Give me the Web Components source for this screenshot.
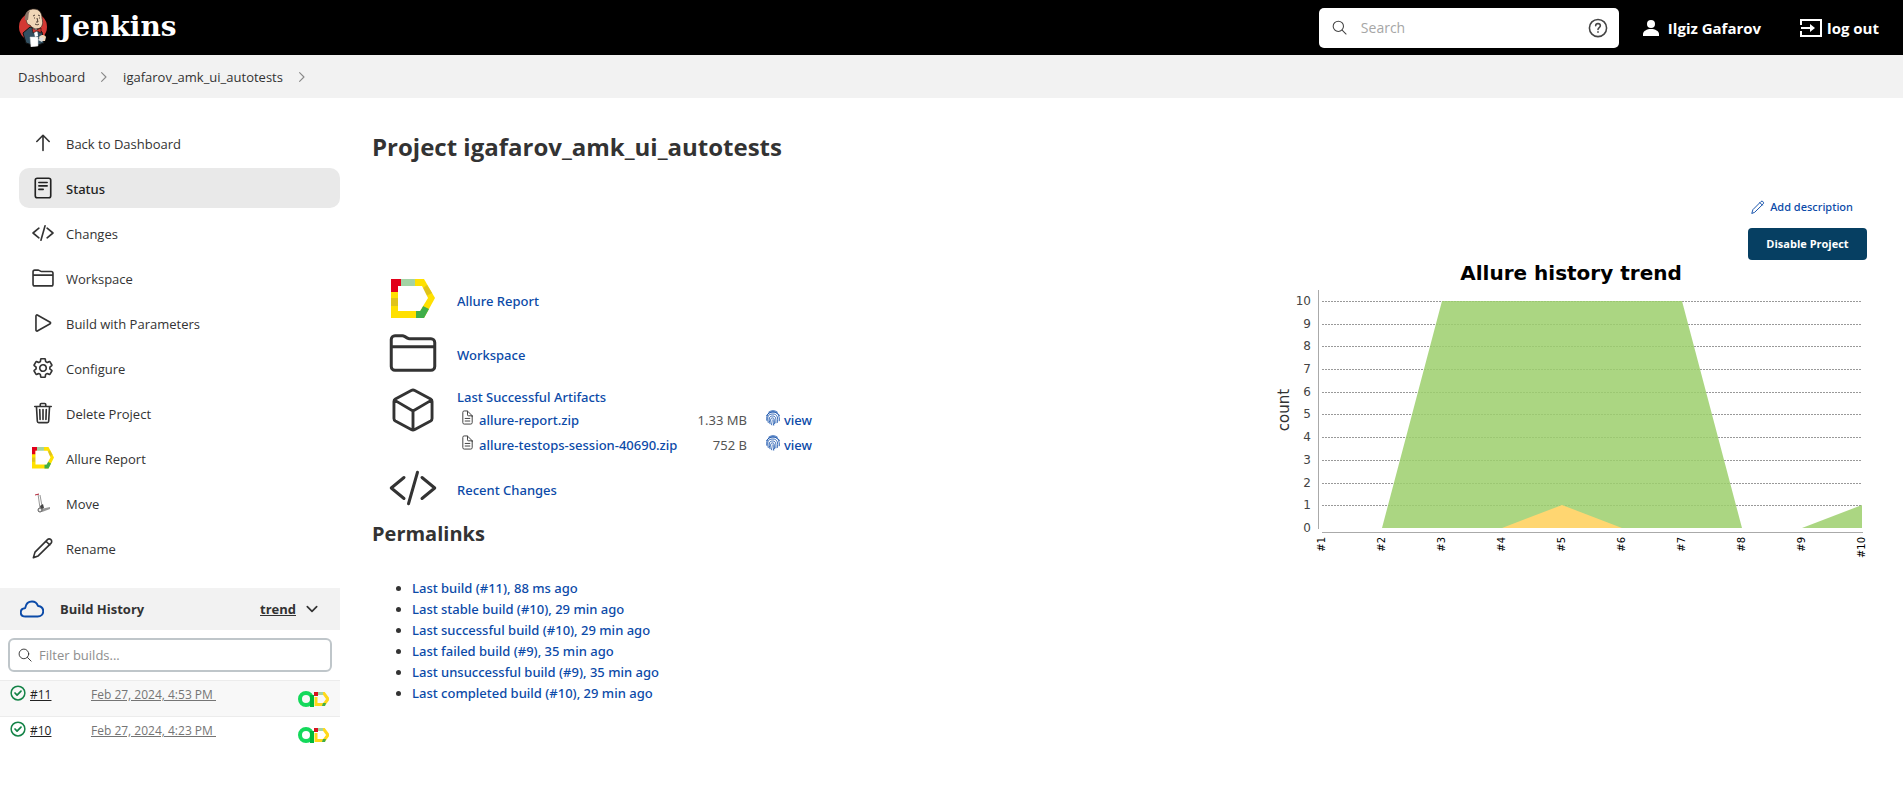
<!DOCTYPE html>
<html lang="en">
<head>
<meta charset="utf-8">
<title>igafarov_amk_ui_autotests [Jenkins]</title>
<style>
  body { margin: 0; background: #fff; color: #333; font: 13px/20px "Open Sans", "Noto Sans", sans-serif; --medium: "Noto Sans", "Open Sans", sans-serif; }
  .page { display: flex; align-items: flex-start; }
  side-panel { flex: 0 0 340px; }
  project-main { flex: 1 1 0; min-width: 0; }
</style>
</head>
<body>
<page-header></page-header>
<bread-crumbs></bread-crumbs>
<div class="page">
  <side-panel>
    <side-task icon="up">Back to Dashboard</side-task>
    <side-task icon="status" active>Status</side-task>
    <side-task icon="code">Changes</side-task>
    <side-task icon="folder">Workspace</side-task>
    <side-task icon="play">Build with Parameters</side-task>
    <side-task icon="gear">Configure</side-task>
    <side-task icon="trash">Delete Project</side-task>
    <side-task icon="allure">Allure Report</side-task>
    <side-task icon="move">Move</side-task>
    <side-task icon="pencil">Rename</side-task>
    <build-history slot="history">
      <build-row number="#11" striped>Feb 27, 2024, 4:53 PM&nbsp;</build-row>
      <build-row number="#10">Feb 27, 2024, 4:23 PM&nbsp;</build-row>
    </build-history>
  </side-panel>
  <project-main></project-main>
</div>
<script>
const ICONS = {
  up: '<path d="M112 220l144-144 144 144M256 92v336"/>',
  status: '<rect x="76" y="28" width="360" height="456" rx="48"/><path d="M160 128h192M160 208h192M160 288h100"/>',
  code: '<path d="M160 368L24 256l136-112M352 368l136-112-136-112M304 88l-96 336"/>',
  folder: '<path d="M448 440H64a40 40 0 01-40-40V112a40 40 0 0140-40h80a40 40 0 0122 7l30 18a40 40 0 0022 7h230a40 40 0 0140 40v256a40 40 0 01-40 40zM24 188h464"/>',
  play: '<path d="M92 91v330c0 17 17 28 31 20l300-168c12-7 12-27 0-34L123 71c-14-8-31 3-31 20z"/>',
  gear: '<path d="M262 180a76 76 0 1070 70 76 76 0 00-70-70zM416 256a154 154 0 01-2 21l46 35a11 11 0 012 14l-42 74a11 11 0 01-13 5l-45-18a16 16 0 00-15 1A164 164 0 01325 401a16 16 0 00-9 12l-7 48a11 11 0 01-10 9h-86a11 11 0 01-10-9l-7-48a16 16 0 00-9-12 155 155 0 01-22-13 16 16 0 00-15-1l-45 18a11 11 0 01-13-5l-43-74a11 11 0 013-14l38-30a16 16 0 006-14 150 150 0 010-25 16 16 0 00-6-14l-38-30a11 11 0 01-3-13l43-74a11 11 0 0113-5l45 18a16 16 0 0015-1A164 164 0 01187 111a16 16 0 009-12l7-48a11 11 0 0110-9h86a11 11 0 0110 9l7 48a16 16 0 009 12 155 155 0 0122 13 16 16 0 0015 1l45-18a11 11 0 0113 5l42 74a11 11 0 01-2 13l-38 30a16 16 0 00-6 14z"/>',
  trash: '<path d="M104 112l20 336c1 18 14 32 32 32h200c18 0 31-14 32-32l20-336M64 104h384M192 104V60a24 24 0 0124-24h80a24 24 0 0124 24v44M256 176v232M180 176l8 232M332 176l-8 232"/>',
  pencil: '<path d="M32 480l38-128L366 56c40-36 100 8 92 60-2 12-8 24-18 34L144 440zM326 98l88 88"/>',
  cube: '<path d="M468 350V162a32 32 0 00-16-28L276 38a44 44 0 00-40 0L60 134a32 32 0 00-16 28v188a32 32 0 0016 28l176 96a44 44 0 0040 0l176-96a32 32 0 0016-28zM50 146l206 122 206-122M256 478V268"/>',
  doc: '<path d="M416 210v222a48 48 0 01-48 48H144a48 48 0 01-48-48V80a48 48 0 0148-48h94a32 32 0 0123 9l146 146a32 32 0 019 23zM256 40v126a32 32 0 0032 32h120M176 288h160M176 376h160"/>',
  cloud: '<path d="M100 241a16 16 0 0013-13C127 146 186 96 256 96c65 0 108 42 125 87a16 16 0 0013 10C449 202 496 239 496 304c0 66-54 112-120 112H116c-55 0-100-27-100-88 0-54 44-81 84-87z"/>',
  search: '<circle cx="216" cy="216" r="176"/><path d="M346 346l134 134"/>',
  right: '<path d="M168 96l160 160-160 160"/>',
  down: '<path d="M56 156l200 200 200-200"/>',
  check: '<circle cx="256" cy="256" r="220"/><path stroke-width="56" d="M160 256l66 66 126-124"/>',
  help: '<circle cx="256" cy="256" r="220"/><path d="M196 200c0-74 120-74 120 0 0 46-60 42-60 92M256 350v16"/>',
  finger: '<path d="M120 66c84-58 194-58 274 0M52 180c70-150 330-180 410 0M56 330c-26-220 100-266 196-266 130 0 226 100 206 280M104 400c-34-160-30-272 148-272 150 0 170 140 146 270M160 440c-44-160-36-248 88-248 110 0 104 110 100 220M216 476c-40-120-64-220 28-224 70 0 44 110 60 190M254 316c4 60 4 110 22 170"/>'
};
const ART = {
  allure: ['0 0 44 40', '<path fill="#ffe000" d="M0 0h33l11 19-11 20H0z"/><path fill="#e2001a" d="M0 0h10v7H7v6H0z"/><path fill="#a3d3a4" d="M10 0h14v8H10z"/><path fill="#e0c31a" d="M0 19h7v8H0zM31 10l5-4 5 8-6 3z"/><path fill="#3fae49" d="M25 39v-7h4l3-5 6 3-5 9z"/><path class="hole" d="M7 7h24l6 12-8 13H7z"/>'],
  move: ['0 0 22 22', '<path fill="none" stroke="#999" stroke-width="1" d="M6 2l2 14M8 3l2 11"/><path fill="none" stroke="#b8283c" stroke-width="1" d="M3 3l4-1"/><path fill="#444" d="M8 14l3-2 1 4-3 2z"/><path fill="#999" d="M9 17l9-2v2l-8 3z"/><circle cx="8" cy="18" r="2" fill="#eee" stroke="#555"/>'],
  user: ['0 0 16 16', '<circle cx="8" cy="4" r="4" fill="#fff"/><path fill="#fff" d="M0 16v-2c0-3 4-5 8-5s8 2 8 5v2z"/>'],
  logout: ['0 0 22 18', '<path fill="none" stroke="#fff" stroke-width="2" d="M1 6V1h20v16H1v-5M1 9h12"/><path fill="#fff" d="M10 5l5 4-5 4z"/>'],
  ops: ['0 0 31 16', '<circle cx="8" cy="8" r="6" fill="none" stroke="#14d95b" stroke-width="4"/><path fill="#00b83c" d="M12 4h4v12h-4z"/><path fill="none" stroke="#ffd91a" stroke-width="3" d="M18 6v7.500h8l4-5.500-4-5.500h-5"/><path fill="#d8121f" d="M16 1h4v4h-4z"/><path fill="#a3d3a4" d="M20 1h5v3h-5z"/><path fill="#3fae49" d="M24 15l1-3h3l-1 3z"/>'],
  butler: ['0 0 28 39', '<circle cx="14" cy="19" r="14" fill="#d33833"/><path fill="#335061" stroke="#111" d="M4 25l7-6 8 2 4 3 2 11-9 3-9-3z"/><path fill="#fff" d="M14 20l4 0 1 8-3 1z"/><path fill="#f0d6b7" stroke="#3a2b24" stroke-width=".700" d="M7 9C6 3 11 1 15 1c6 0 8 5 8 9 1 4 1 8-2 10-4 2-8 0-10-3-3 0-4-4-4-8z"/><path fill="#8a7266" d="M6 12C5 6 8 3 11 3c-2 3-1 5-2 9z"/><path fill="none" stroke="#3a2b24" stroke-width=".900" d="M14 8l2-1M19 7l2 1M15 10h1M20 10h1M18 10l1 4h-2M16 16c2 1 3 1 4 0"/><path fill="#d33833" stroke="#111" stroke-width=".600" d="M13 20l4 2 5-2v5l-4-2-4 2z"/><path fill="#fff" stroke="#ccc" stroke-width=".500" d="M11 29h8v9l-7 1z"/><path fill="#f0d6b7" d="M20 29c3-3 6-2 7 0l-1 4-5 0z"/><path fill="#ddd" d="M19 32l3-3 3 1-2 4z"/>']
};

/* Base class: clones the subclass's template into an open shadow root. */
class Base extends HTMLElement {
  connectedCallback() {
    if (this.shadowRoot) return;
    const t = document.createElement('template');
    t.innerHTML = this.render();
    this.attachShadow({ mode: 'open' }).append(t.content.cloneNode(true));
  }
}

const RESET = `:host,*{box-sizing:border-box} a{color:inherit;text-decoration:none} a:hover{text-decoration:underline} button,input{font:inherit}`;

/* <ui-icon name w h stroke> */
customElements.define('ui-icon', class extends Base {
  render() {
    const n = this.getAttribute('name'), w = this.getAttribute('w') || 22, h = this.getAttribute('h') || w;
    const art = ART[n];
    const s = this.getAttribute('stroke') || 32;
    return `<style>:host{display:inline-flex;flex:none;width:${w}px;height:${h}px}svg{display:block}.hole{fill:#fff}</style>` +
      (art ? `<svg width="${w}" height="${h}" viewBox="${art[0]}" preserveAspectRatio="none" aria-hidden="true">${art[1]}</svg>`
           : `<svg width="${w}" height="${h}" viewBox="0 0 512 512" aria-hidden="true" fill="none" stroke="currentColor" stroke-width="${s}" stroke-linecap="round" stroke-linejoin="round">${ICONS[n]}</svg>`);
  }
});

customElements.define('page-header', class extends Base {
  render() {
    return `<style>${RESET}
      :host{display:block;background:#000;color:#fff}
      header{display:flex;align-items:center;height:55px;padding:0 24px 0 19px;font-weight:700;font-size:15px}
      .brand{display:flex;align-items:center;gap:12px;font:700 28px/39px "DejaVu Serif",serif;margin-right:auto}
      .brand span{padding-bottom:3px}
      .brand:hover{text-decoration:none}
      form{display:flex;align-items:center;width:300px;height:40px;padding:0 11px 0 13px;border-radius:5px;background:#fff;color:#444}
      form label{display:flex}
      input{flex:1;min-width:0;margin:0 0 0 14px;padding:0;border:0;outline:0;background:none;font-size:14px;font-weight:400;color:#333}
      input::placeholder{color:#a6a6a6;opacity:1}
      form a{display:flex}
      .user,.out{display:flex;align-items:center}
      .user{gap:9px;margin-left:24px}
      .out{gap:5px;margin-left:39px}
    </style>
    <header>
      <a class="brand" href="#"><ui-icon name="butler" w="28" h="39"></ui-icon><span>Jenkins</span></a>
      <form role="search">
        <label for="q" aria-label="Search"><ui-icon name="search" w="15" stroke="36"></ui-icon></label>
        <input id="q" type="text" placeholder="Search">
        <a href="#" aria-label="Search help"><ui-icon name="help" w="20" stroke="40"></ui-icon></a>
      </form>
      <a class="user" href="#"><ui-icon name="user" w="16"></ui-icon>Ilgiz Gafarov</a>
      <a class="out" href="#"><ui-icon name="logout" w="22" h="18"></ui-icon>log out</a>
    </header>`;
  }
});

customElements.define('bread-crumbs', class extends Base {
  render() {
    return `<style>${RESET}
      :host{display:block;background:#f2f2f2}
      nav{display:flex;align-items:center;height:43px;padding:0 18px;gap:12px}
      ui-icon{color:#888}
    </style>
    <nav aria-label="Breadcrumb"><a href="#">Dashboard</a><ui-icon name="right" w="14" stroke="40"></ui-icon>
    <a href="#">igafarov_amk_ui_autotests</a><ui-icon name="right" w="14" stroke="40"></ui-icon></nav>`;
  }
});

customElements.define('side-panel', class extends Base {
  render() {
    return `<style>
      :host{display:block;padding-top:25px}
      nav{display:flex;flex-direction:column;gap:5px;padding-left:19px;margin-bottom:20px}
    </style><nav><slot></slot></nav><slot name="history"></slot>`;
  }
});

customElements.define('side-task', class extends Base {
  render() {
    return `<style>${RESET}
      :host{display:block}
      a{display:flex;align-items:center;gap:12px;height:40px;padding:0 13px;border-radius:10px}
      a:hover{text-decoration:none;background:#f2f2f2}
      span{padding-top:2px}
      :host([active]) a{background:#e9e9e9;font-family:var(--medium);font-weight:500;color:#222}
    </style><a href="#"><ui-icon name="${this.getAttribute('icon')}" w="22" stroke="38"></ui-icon><span><slot></slot></span></a>`;
  }
});

customElements.define('build-history', class extends Base {
  render() {
    return `<style>${RESET}
      :host{display:block}
      .bar{display:flex;align-items:center;height:42px;padding:0 22px 0 20px;background:#f2f2f2;font-weight:700}
      .bar ui-icon{color:#0b4aa8}
      h2{margin:0 auto 0 16px;font:inherit}
      .trend{text-decoration:underline}
      button{display:flex;margin-left:10px;padding:0;border:0;background:none}
      .bar button ui-icon{color:#333}
      .filter{display:flex;align-items:center;height:34px;margin:8px;padding:0 8px;border:2px solid #bfc6ca;border-radius:6px}
      .filter label{display:flex}
      input{flex:1;min-width:0;margin:0 0 0 7px;padding:0;border:0;outline:0;background:none}
      input::placeholder{color:#8e8e8e;opacity:1}
    </style>
    <div class="bar"><ui-icon name="cloud" w="24" stroke="42"></ui-icon><h2>Build History</h2>
      <a class="trend" href="#">trend</a>
      <button type="button" aria-label="Collapse"><ui-icon name="down" w="12" stroke="72"></ui-icon></button></div>
    <div class="filter"><label for="f" aria-label="Filter builds"><ui-icon name="search" w="14" stroke="34"></ui-icon></label>
      <input id="f" type="text" placeholder="Filter builds..."></div>
    <slot></slot>`;
  }
});

customElements.define('build-row', class extends Base {
  render() {
    return `<style>${RESET}
      :host{display:grid;grid-template-columns:81px 1fr auto;align-items:start;height:36px;padding:4px 11px 0 10px;font-size:12px}
      :host([striped]){height:37px;background:#f8f8f8;border-top:1px solid #ececec;border-bottom:1px solid #ececec}
      .no{display:flex;gap:4px}
      .no ui-icon{color:#138347}
      .no a,.date{text-decoration:underline}
      .no a{color:#222}
      .date{color:#757575}
      .ops{padding-top:6px}
    </style>
    <span class="no"><ui-icon name="check" w="16" stroke="48"></ui-icon><a href="#">${this.getAttribute('number')}</a></span>
    <span><a class="date" href="#"><slot></slot></a></span>
    <a class="ops" href="#" aria-label="Allure"><ui-icon name="ops" w="31" h="16"></ui-icon></a>`;
  }
});

customElements.define('summary-item', class extends Base {
  render() {
    return `<style>${RESET}
      :host{display:flex;align-items:center;gap:20px;color:#0b4aa8;font-family:var(--medium);font-weight:500}
      :host([top]){align-items:flex-start}
      .ic{display:flex;flex:none;width:48px;justify-content:center;color:#333}
      .body{padding-top:4px}
      :host([top]) .body{padding-top:0}
    </style><span class="ic"><ui-icon name="${this.getAttribute('icon')}" w="${this.getAttribute('w') || 48}" h="${this.getAttribute('h') || 48}" stroke="32"></ui-icon></span><div class="body"><slot></slot></div>`;
  }
});

customElements.define('artifact-table', class extends Base {
  render() {
    const row = (n, s) => `<tr><td class="i"><ui-icon name="doc" w="15" stroke="34"></ui-icon></td><td class="n"><a href="#">${n}</a></td><td class="s">${s}</td><td class="f"><ui-icon name="finger" w="16" stroke="26"></ui-icon></td><td><a href="#">view</a></td></tr>`;
    return `<style>${RESET}
      :host{display:block}
      table{border-collapse:collapse}
      td{height:25px;padding:0;vertical-align:middle}
      .i{width:22px;padding-left:3px;color:#444}
      .n{width:216px}
      .s{width:52px;text-align:right;color:#555;font-weight:400}
      .f{width:37px;padding-left:18px}
      ui-icon{display:block;margin-bottom:4px}
    </style><table><tbody>${row('allure-report.zip', '1.33 MB')}${row('allure-testops-session-40690.zip', '752 B')}</tbody></table>`;
  }
});

/* Area chart; plot origin is (55, 268) with 60px per build and 68/3 px per count. */
customElements.define('allure-trend', class extends Base {
  render() {
    const X = i => 55 + (i - 1) * 60, Y = v => 268 - Math.round(v * 22.7);
    const grid = [], ys = [], xs = [];
    for (let v = 0; v <= 10; v++) {
      if (v) grid.push(`<path d="M55 ${Y(v)}.500H595"/>`);
      ys.push(`<text x="44" y="${Y(v) + 4}" text-anchor="end">${v}</text>`);
    }
    for (let i = 1; i <= 10; i++)
      xs.push(`<text transform="translate(${X(i) + 3} 277) rotate(-90)" text-anchor="end">#${i}</text>`);
    return `<style>:host{display:block;width:600px;max-width:100%}svg{display:block;width:100%;height:auto;font-family:"DejaVu Sans",sans-serif;overflow:visible}</style>
    <svg viewBox="0 0 600 300" role="img" aria-label="Allure history trend">
      <text x="304" y="20" text-anchor="middle" font-size="20" font-weight="700" fill="#000">Allure history trend</text>
      <g stroke="#999" stroke-dasharray="2 1" shape-rendering="crispEdges">${grid.join('')}</g>
      <path fill="#9ccf6c" fill-opacity=".850" d="M${X(2)} ${Y(0)}L${X(3)} ${Y(10)}H${X(7)}L${X(8)} ${Y(0)}zM${X(9)} ${Y(0)}L${X(10)} ${Y(1)}V${Y(0)}z"/>
      <path fill="#ffd671" d="M${X(4)} ${Y(0)}L${X(5)} ${Y(1)}L${X(6)} ${Y(0)}z"/>
      <g fill="none" stroke="#aaa" shape-rendering="crispEdges"><path d="M51.500 30V269M55 272.500H596"/></g>
      <g font-size="12" fill="#444">${ys.join('')}</g>
      <g font-size="10" fill="#000">${xs.join('')}</g>
      <text transform="translate(22 150) rotate(-90)" text-anchor="middle" font-size="15" fill="#333">count</text>
    </svg>`;
  }
});

customElements.define('project-main', class extends Base {
  render() {
    const links = ['Last build (#11), 88 ms ago', 'Last stable build (#10), 29 min ago', 'Last successful build (#10), 29 min ago', 'Last failed build (#9), 35 min ago', 'Last unsuccessful build (#9), 35 min ago', 'Last completed build (#10), 29 min ago'];
    return `<style>${RESET}
      :host{display:block;padding:32px 36px 40px 32px}
      h1{margin:0 0 30px;font-size:24px;line-height:34px}
      .cols{display:flex;align-items:flex-start;justify-content:space-between;gap:24px}
      .side{display:flex;flex:0 1 600px;min-width:0;flex-direction:column;align-items:flex-end}
      .add{display:flex;align-items:center;gap:5px;margin-right:14px;height:26px;color:#0b4aa8;font-family:var(--medium);font-weight:500;font-size:11px}
      button{width:119px;height:32px;margin:8px 0 0;padding:0;border:0;border-radius:4px;background:#063f62;color:#fff;font-size:11px;font-weight:700}
      .list{display:flex;flex-direction:column;padding:78px 0 0 17px}
      .list summary-item{min-height:54px}
      .list summary-item[top]{margin:7px 0 4px}
      h2{margin:5px 0 30px;font-size:20px;line-height:28px}
      ul{margin:0;padding:0 0 0 40px;line-height:21px;font-family:var(--medium);font-weight:500}
      li a{color:#0b4aa8}
    </style>
    <main>
      <h1>Project igafarov_amk_ui_autotests</h1>
      <div class="cols">
        <div>
          <div class="list">
            <summary-item icon="allure" w="44" h="40"><a href="#">Allure Report</a></summary-item>
            <summary-item icon="folder"><a href="#">Workspace</a></summary-item>
            <summary-item icon="cube" w="46" h="46" top><a href="#">Last Successful Artifacts</a><artifact-table></artifact-table></summary-item>
            <summary-item icon="code"><a href="#">Recent Changes</a></summary-item>
          </div>
          <h2>Permalinks</h2>
          <ul>${links.map(l => `<li><a href="#">${l}</a></li>`).join('')}</ul>
        </div>
        <div class="side">
          <a class="add" href="#"><ui-icon name="pencil" w="14" stroke="34"></ui-icon>Add description</a>
          <button type="button">Disable Project</button>
          <allure-trend></allure-trend>
        </div>
      </div>
    </main>`;
  }
});
</script>
</body>
</html>
